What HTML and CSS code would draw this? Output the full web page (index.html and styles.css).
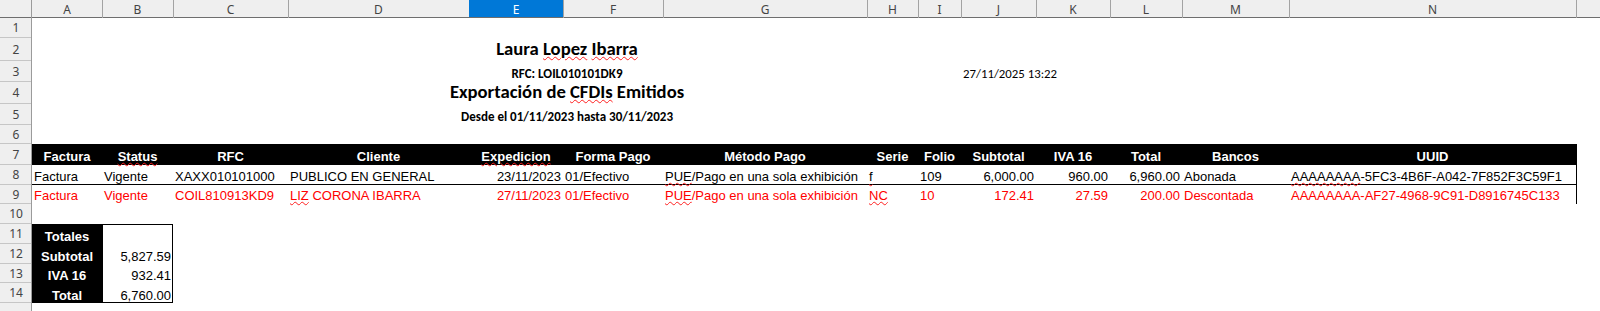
FILE: index.html
```html
<!DOCTYPE html>
<html lang="es">
<head>
<meta charset="utf-8">
<title>Exportación de CFDIs Emitidos</title>
<link rel="stylesheet" href="styles.css">
</head>
<body>
<table class="sheet">
  <colgroup>
    <col class="w-rh"><col class="w-a"><col class="w-b"><col class="w-c"><col class="w-d"><col class="w-e"><col class="w-f"><col class="w-g"><col class="w-h"><col class="w-i"><col class="w-j"><col class="w-k"><col class="w-l"><col class="w-m"><col class="w-n"><col class="w-rest">
  </colgroup>
  <thead>
    <tr class="r-hdr">
      <th class="corner"></th>
      <th class="colh first">A</th>
      <th class="colh">B</th>
      <th class="colh">C</th>
      <th class="colh">D</th>
      <th class="colh sel">E</th>
      <th class="colh">F</th>
      <th class="colh">G</th>
      <th class="colh">H</th>
      <th class="colh">I</th>
      <th class="colh">J</th>
      <th class="colh">K</th>
      <th class="colh">L</th>
      <th class="colh">M</th>
      <th class="colh">N</th>
      <th class="colh"></th>
    </tr>
  </thead>
  <tbody>
    <tr class="r1"><th class="rn">1</th><td colspan="15"></td></tr>
    <tr class="r2"><th class="rn">2</th><td colspan="2"></td><td colspan="7" class="title big">Laura <span class="sp">Lopez</span> <span class="sp">Ibarra</span></td><td colspan="6"></td></tr>
    <tr class="r3"><th class="rn">3</th><td colspan="2"></td><td colspan="7" class="title small">RFC: LOIL010101DK9</td><td colspan="2" class="stamp">27/11/2025 13:22</td><td colspan="4"></td></tr>
    <tr class="r4"><th class="rn">4</th><td colspan="2"></td><td colspan="7" class="title big">Exportación de <span class="sp">CFDIs</span> Emitidos</td><td colspan="6"></td></tr>
    <tr class="r5"><th class="rn">5</th><td colspan="2"></td><td colspan="7" class="title small">Desde el 01/11/2023 hasta 30/11/2023</td><td colspan="6"></td></tr>
    <tr class="r6"><th class="rn">6</th><td colspan="15"></td></tr>
    <tr class="r7 head">
      <th class="rn">7</th>
      <td>Factura</td>
      <td><span class="sp">Status</span></td>
      <td>RFC</td>
      <td>Cliente</td>
      <td><span class="sp">Expedicion</span></td>
      <td>Forma Pago</td>
      <td>Método Pago</td>
      <td>Serie</td>
      <td>Folio</td>
      <td>Subtotal</td>
      <td>IVA 16</td>
      <td>Total</td>
      <td>Bancos</td>
      <td>UUID</td>
      <td class="edge"></td>
    </tr>
    <tr class="r8 data under">
      <th class="rn">8</th>
      <td>Factura</td>
      <td>Vigente</td>
      <td>XAXX010101000</td>
      <td>PUBLICO EN GENERAL</td>
      <td class="num">23/11/2023</td>
      <td>01/Efectivo</td>
      <td><span class="sp">PUE</span>/Pago en una sola exhibición</td>
      <td><span class="sp">f</span></td>
      <td>109</td>
      <td class="num">6,000.00</td>
      <td class="num">960.00</td>
      <td class="num">6,960.00</td>
      <td>Abonada</td>
      <td><span class="sp">AAAAAAAA</span>-5FC3-4B6F-A042-7F852F3C59F1</td>
      <td class="edge"></td>
    </tr>
    <tr class="r9 data red">
      <th class="rn">9</th>
      <td>Factura</td>
      <td>Vigente</td>
      <td>COIL810913KD9</td>
      <td><span class="sp">LIZ</span> CORONA IBARRA</td>
      <td class="num">27/11/2023</td>
      <td>01/Efectivo</td>
      <td><span class="sp">PUE</span>/Pago en una sola exhibición</td>
      <td><span class="sp">NC</span></td>
      <td>10</td>
      <td class="num">172.41</td>
      <td class="num">27.59</td>
      <td class="num">200.00</td>
      <td>Descontada</td>
      <td>AAAAAAAA-AF27-4968-9C91-D8916745C133</td>
      <td class="edge"></td>
    </tr>
    <tr class="r10"><th class="rn">10</th><td colspan="15"></td></tr>
    <tr class="r11 tot"><th class="rn">11</th><td class="lab">Totales</td><td class="val top"></td><td colspan="13"></td></tr>
    <tr class="r12 tot"><th class="rn">12</th><td class="lab">Subtotal</td><td class="val">5,827.59</td><td colspan="13"></td></tr>
    <tr class="r13 tot"><th class="rn">13</th><td class="lab">IVA 16</td><td class="val">932.41</td><td colspan="13"></td></tr>
    <tr class="r14 tot"><th class="rn">14</th><td class="lab">Total</td><td class="val bottom">6,760.00</td><td colspan="13"></td></tr>
    <tr class="r15"><th class="rn"></th><td colspan="15"></td></tr>
  </tbody>
</table>
</body>
</html>
```

FILE: styles.css
```css
html, body {
  margin: 0;
  padding: 0;
  background: #ffffff;
}
body {
  width: 1600px;
  height: 311px;
  overflow: hidden;
}

.sheet {
  border-collapse: separate;
  border-spacing: 0;
  table-layout: fixed;
  width: 1600px;
}

.w-rh { width: 32px; }
.w-a { width: 70px; }
.w-b { width: 71px; }
.w-c { width: 115px; }
.w-d { width: 181px; }
.w-e { width: 94px; }
.w-f { width: 100px; }
.w-g { width: 204px; }
.w-h { width: 51px; }
.w-i { width: 43px; }
.w-j { width: 75px; }
.w-k { width: 74px; }
.w-l { width: 72px; }
.w-m { width: 107px; }
.w-n { width: 287px; }
.w-rest { width: 24px; }

/* Row heights */
.r-hdr { height: 18px; }
.r1 { height: 20px; }
.r2 { height: 23px; }
.r3 { height: 21px; }
.r4 { height: 22px; }
.r5 { height: 21px; }
.r6 { height: 19px; }
.r7 { height: 21px; }
.r8 { height: 20px; }
.r9 { height: 19px; }
.r10 { height: 20px; }
.r11 { height: 20px; }
.r12 { height: 20px; }
.r13 { height: 19px; }
.r14 { height: 20px; }
.r15 { height: 12px; }

/* Column header */
.corner,
.colh {
  padding: 0;
  background: #efefef;
  font: 400 12px/17px "Noto Sans", "Open Sans", sans-serif;
  color: #444444;
  text-align: center;
  vertical-align: middle;
  box-shadow: inset 1px 0 0 #a3a3a3, inset 0 -1px 0 #6e6e6e;
}
.corner {
  box-shadow: inset -1px 0 0 #9b9b9b, inset 0 -1px 0 #6e6e6e;
}
.colh.first {
  box-shadow: inset 0 -1px 0 #6e6e6e;
}
.colh.sel {
  background: #0078d7;
  color: #ffffff;
  box-shadow: inset 0 -1px 0 #6e6e6e;
}

/* Row header */
.rn {
  padding: 0;
  background: #efefef;
  font: 400 12px/16px "Noto Sans", "Open Sans", sans-serif;
  color: #444444;
  text-align: center;
  vertical-align: middle;
  box-shadow: inset -1px 0 0 #9b9b9b, inset 0 -1px 0 #c6c6c6;
}

/* Cells */
td {
  padding: 0 2px 1px;
  vertical-align: bottom;
  font: 400 13px/15px "Liberation Sans", Arial, sans-serif;
  color: #000000;
  white-space: nowrap;
  overflow: visible;
}

.sp {
  text-decoration: underline wavy #ff2020;
  text-decoration-thickness: 1px;
  text-underline-offset: 1px;
}

/* Report heading */
.title {
  text-align: center;
  font-family: Carlito, Lato, "Open Sans", sans-serif;
  font-weight: 700;
}
.title.big {
  font-size: 18.67px;
  line-height: 20px;
  padding-bottom: 2px;
}
.title.small {
  font-size: 13px;
  line-height: 15px;
}
.stamp {
  font-family: Carlito, Lato, "Open Sans", sans-serif;
  font-size: 12.8px;
  line-height: 15px;
}

/* Table header row */
.head td {
  background: #000000;
  color: #ffffff;
  font-weight: 700;
  text-align: center;
}
.head td.edge,
.data td.edge {
  background: #ffffff;
  box-shadow: inset 1px 0 0 #000000;
}

.num {
  text-align: right;
}
.data td.num {
  padding-right: 2px;
}
.under td {
  box-shadow: inset 0 -1px 0 #000000;
}
.under td.edge {
  box-shadow: inset 1px 0 0 #000000;
}
.red td {
  color: #ff0000;
}

/* Totals block */
.tot td {
  padding-bottom: 0;
}
.tot .lab {
  background: #000000;
  color: #ffffff;
  font-weight: 700;
  text-align: center;
}
.tot .val {
  text-align: right;
  box-shadow: inset 1px 0 0 #000000, inset -1px 0 0 #000000;
}
.tot .val.top {
  box-shadow: inset 1px 0 0 #000000, inset -1px 0 0 #000000, inset 0 1px 0 #000000;
}
.tot .val.bottom {
  box-shadow: inset 1px 0 0 #000000, inset -1px 0 0 #000000, inset 0 -1px 0 #000000;
}
```
